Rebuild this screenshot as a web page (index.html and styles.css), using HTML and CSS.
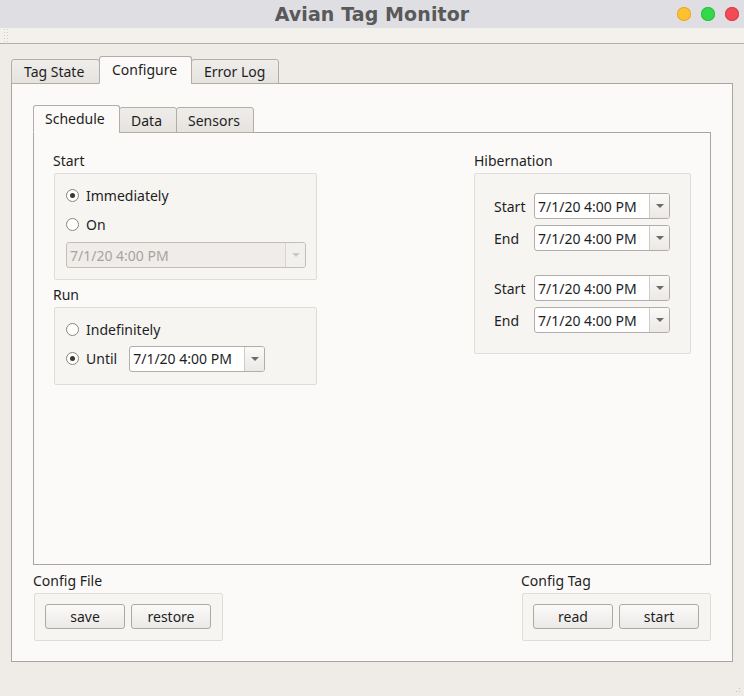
FILE: index.html
```html
<!DOCTYPE html>
<html>
<head>
<meta charset="utf-8">
<link rel="stylesheet" href="styles.css">
</head>
<body>
<div class="window">
  <div class="titlebar">
    <div class="title">Avian Tag Monitor</div>
    <div class="lights">
      <span class="light yellow"></span>
      <span class="light green"></span>
      <span class="light red"></span>
    </div>
  </div>
  <div class="toolbar"><span class="grip"></span></div>
  <div class="main">
    <div class="tabs">
      <div class="tab">Tag State</div>
      <div class="tab active">Configure</div>
      <div class="tab">Error Log</div>
    </div>
    <div class="panel">
      <div class="tabs inner-tabs">
        <div class="tab itab active">Schedule</div>
        <div class="tab itab">Data</div>
        <div class="tab itab">Sensors</div>
      </div>
      <div class="inner-panel">
        <div class="col left-col">
          <div class="glabel">Start</div>
          <div class="group start-group">
            <div class="radio-row"><span class="radio checked"></span><span>Immediately</span></div>
            <div class="radio-row"><span class="radio"></span><span>On</span></div>
            <div class="combo disabled wide"><span class="ctext">7/1/20 4:00 PM</span><span class="cbtn"><span class="arrow"></span></span></div>
          </div>
          <div class="glabel run-label">Run</div>
          <div class="group run-group">
            <div class="radio-row"><span class="radio"></span><span>Indefinitely</span></div>
            <div class="radio-row until"><span class="radio checked"></span><span class="until-text">Until</span>
              <div class="combo"><span class="ctext">7/1/20 4:00 PM</span><span class="cbtn"><span class="arrow"></span></span></div>
            </div>
          </div>
        </div>
        <div class="col right-col">
          <div class="glabel">Hibernation</div>
          <div class="group hib-group">
            <div class="hib-row"><span class="hlabel">Start</span><div class="combo"><span class="ctext">7/1/20 4:00 PM</span><span class="cbtn"><span class="arrow"></span></span></div></div>
            <div class="hib-row"><span class="hlabel">End</span><div class="combo"><span class="ctext">7/1/20 4:00 PM</span><span class="cbtn"><span class="arrow"></span></span></div></div>
            <div class="hib-row gap"><span class="hlabel">Start</span><div class="combo"><span class="ctext">7/1/20 4:00 PM</span><span class="cbtn"><span class="arrow"></span></span></div></div>
            <div class="hib-row"><span class="hlabel">End</span><div class="combo"><span class="ctext">7/1/20 4:00 PM</span><span class="cbtn"><span class="arrow"></span></span></div></div>
          </div>
        </div>
      </div>
      <div class="bottom">
        <div class="bcol">
          <div class="glabel">Config File</div>
          <div class="group btn-group">
            <button class="btn">save</button>
            <button class="btn">restore</button>
          </div>
        </div>
        <div class="bcol">
          <div class="glabel">Config Tag</div>
          <div class="group btn-group">
            <button class="btn">read</button>
            <button class="btn">start</button>
          </div>
        </div>
      </div>
    </div>
  </div>
  <span class="sizegrip"></span>
</div>
</body>
</html>
```

FILE: styles.css
```css
* { box-sizing: border-box; }
html, body { margin: 0; padding: 0; }
body {
  width: 744px;
  height: 696px;
  overflow: hidden;
  font-family: "Noto Sans", "DejaVu Sans", sans-serif;
  font-size: 14px;
  color: #1e1e1e;
  background: #efebe7;
}
.window { position: relative; width: 744px; height: 696px; }
.titlebar {
  height: 28px;
  background: #dfdee3;
  display: flex;
  align-items: center;
  justify-content: center;
  position: relative;
}
.title {
  font-family: "DejaVu Sans", sans-serif;
  font-weight: bold;
  font-size: 19px;
  color: #595959;
  letter-spacing: 0.1px;
}
.lights {
  position: absolute;
  right: 5px;
  top: 7px;
  display: flex;
  gap: 10px;
}
.light { width: 14px; height: 14px; border-radius: 50%; display: block; }
.yellow { background: #fdc131; box-shadow: inset 0 0 0 1px #e9a92a; }
.green { background: #34d84a; box-shadow: inset 0 0 0 1px #2cc03e; }
.red { background: #f34b55; box-shadow: inset 0 0 0 1px #de3e47; }
.toolbar {
  height: 16px;
  background: #f3f1ec;
  border-bottom: 1px solid #b3aea9;
  display: flex;
  padding-left: 3px;
}
.grip {
  width: 6px;
  height: 15px;
  background-image: radial-gradient(circle, #d2cec9 0.5px, transparent 0.7px);
  background-size: 3px 3px;
}
.main { padding: 12px 12px 0 11px; }
.tabs {
  display: flex;
  align-items: flex-end;
  height: 28px;
  margin-bottom: -1px;
  position: relative;
  z-index: 1;
}
.tab {
  height: 25px;
  padding: 0 12px;
  border: 1px solid #b2ada8;
  border-radius: 3px 3px 0 0;
  background: linear-gradient(#efedea, #e6e3df);
  display: flex;
  align-items: center;
  margin-right: -1px;
  color: #1e1e1e;
}
.tab.active {
  height: 28px;
  background: #fcfaf8;
  border-bottom-color: #fcfaf8;
  padding-bottom: 1px;
}
.tab:nth-child(1) { width: 89px; }
.tabs > .tab:nth-child(2) { width: 93px; }
.tabs > .tab:nth-child(3) { width: 88px; }
.panel {
  height: 579px;
  width: 722px;
  border: 1px solid #aaa5a0;
  background: #fcfaf8;
  padding: 21px 21px 0 21px;
}
.inner-tabs { height: 28px; }
.inner-tabs .tab.itab { height: 26px; padding: 0 11px; }
.inner-tabs .tab.itab.active { height: 28px; padding-bottom: 1px; }
.inner-tabs .itab:nth-child(1) { width: 87px; }
.inner-tabs .itab:nth-child(2) { width: 58px; }
.inner-tabs .itab:nth-child(3) { width: 78px; }
.inner-panel {
  height: 433px;
  border: 1px solid #aaa5a0;
  display: flex;
  justify-content: space-between;
  padding: 19px 19px 0 19px;
}
.col { display: flex; flex-direction: column; }
.glabel { height: 18px; line-height: 18px; margin-bottom: 3px; }
.left-col { width: 264px; }
.left-col .group { margin-left: 1px; }
.right-col { width: 217px; }
.group {
  border: 1px solid #e0dcd8;
  border-radius: 2px;
  background: #f7f5f2;
}
.start-group { height: 107px; padding: 7px 0 0 11px; }
.run-group { height: 78px; padding: 7px 0 0 11px; }
.run-label { margin-top: 6px; }
.radio-row { display: flex; align-items: center; height: 29px; }
.radio-row .radio { margin-right: 7px; }
.radio {
  width: 13px;
  height: 13px;
  border-radius: 50%;
  border: 1px solid #8a8580;
  background: #ffffff;
  display: flex;
  align-items: center;
  justify-content: center;
  flex: none;
}
.radio.checked::after {
  content: "";
  width: 5px;
  height: 5px;
  border-radius: 50%;
  background: #3a3835;
}
.until-text { margin-right: 12px; }
.start-group .combo.wide { width: 240px; margin-top: 3px; }
.combo {
  width: 136px;
  height: 26px;
  border: 1px solid #b2ada8;
  border-radius: 3px;
  background: #ffffff;
  display: flex;
  align-items: stretch;
  flex: none;
}
.ctext { flex: 1; display: flex; align-items: center; padding-left: 3px; color: #1e1e1e; white-space: nowrap; }
.cbtn {
  width: 20px;
  border-left: 1px solid #cfcbc6;
  background: linear-gradient(#fbfaf9, #ebe8e5);
  border-radius: 0 2px 2px 0;
  display: flex;
  align-items: center;
  justify-content: center;
}
.arrow {
  width: 0; height: 0;
  border-left: 4px solid transparent;
  border-right: 4px solid transparent;
  border-top: 4px solid #6d6a67;
}
.combo.disabled { background: #efece9; border-color: #c2beb9; }
.combo.disabled .ctext { color: #a7a4a0; }
.combo.disabled .cbtn { background: #f2f0ed; border-left-color: #d8d4d0; }
.combo.disabled .arrow { border-top-color: #cdc9c5; }
.hib-group { height: 181px; padding: 19px 0 0 19px; display: flex; flex-direction: column; }
.hib-row { display: flex; align-items: center; height: 26px; margin-bottom: 6px; flex: none; }
.hib-row.gap { margin-top: 18px; }
.hlabel { width: 40px; }
.bottom {
  display: flex;
  justify-content: space-between;
  margin-top: 7px;
}
.bcol { display: flex; flex-direction: column; }
.bottom .glabel { margin-bottom: 3px; }
.btn-group {
  width: 189px;
  height: 48px;
  margin-left: 1px;
  display: flex;
  gap: 6px;
  padding: 10px 0 0 10px;
}
.btn {
  width: 80px;
  height: 25px;
  border: 1px solid #aca8a3;
  border-radius: 3px;
  background: linear-gradient(#fbfaf9, #ebe9e6);
  font-family: "Noto Sans", "DejaVu Sans", sans-serif;
  font-size: 14px;
  color: #1e1e1e;
  padding: 0;
  line-height: 22px;
}
.sizegrip {
  position: absolute;
  right: 2px;
  bottom: 2px;
  width: 10px;
  height: 10px;
  background-image: radial-gradient(circle, #c5c1bc 0.6px, transparent 0.8px);
  background-size: 3px 3px;
  clip-path: polygon(100% 0, 100% 100%, 0 100%);
}
```
